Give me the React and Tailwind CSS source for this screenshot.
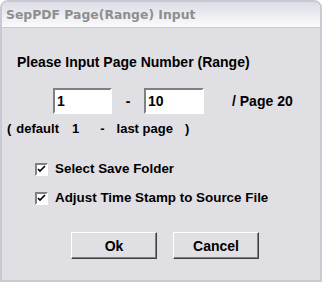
import React, { useState } from "react";

const sunken = "border-t-[#808080] border-l-[#808080] border-b-white border-r-white";

const Check = ({ label, checked, onToggle }) => (
  <label className="flex items-center gap-[7px] cursor-pointer h-[16px]" onClick={onToggle}>
    <span className={`w-[13px] h-[13px] bg-white border-2 ${sunken} flex items-center justify-center`}>
      {checked && (
        <svg width="9" height="9" viewBox="0 0 9 9">
          <path d="M1 4 L3 6 L8 1" stroke="#000" strokeWidth="1.6" fill="none" />
        </svg>
      )}
    </span>
    <span className="text-[13.4px]">{label}</span>
  </label>
);

const Btn = ({ children }) => (
  <button
    type="button"
    className="w-[86px] h-[27px] bg-[#e0dfe3] border border-t-white border-l-white border-b-[#404040] border-r-[#404040] shadow-[inset_-1px_-1px_0_#808080] font-bold"
  >
    {children}
  </button>
);

export default function App() {
  const [from, setFrom] = useState("1");
  const [to, setTo] = useState("10");
  const [saveFolder, setSaveFolder] = useState(true);
  const [stamp, setStamp] = useState(true);

  return (
    <div className="w-[322px] h-[282px] bg-white font-['Liberation_Sans',Arial,sans-serif] text-[14px] leading-[16px] text-black">
      <div className="w-full h-full flex flex-col border-2 border-[#c9c9d4] rounded-t-[8px] overflow-hidden">
        <div className="h-[26px] shrink-0 bg-gradient-to-b from-[#dcdce6] to-[#fbfbfd] border-b border-[#c7c7cf] flex items-center pl-[4px]">
          <span className="font-['DejaVu_Sans',sans-serif] font-bold text-[12.4px] text-[#8e8e8e]">SepPDF Page(Range) Input</span>
        </div>
        <div className="flex-1 bg-[#e0dfe3] flex flex-col font-bold">
          <div className="pl-[15px] pt-[26px]">Please Input Page Number (Range)</div>
          <div className="flex items-center pl-[51px] mt-[18px]">
            <input
              value={from}
              onChange={(e) => setFrom(e.target.value)}
              className={`w-[59px] h-[26px] bg-white border-2 ${sunken} px-[2px] outline-none font-bold`}
            />
            <span className="w-[32px] text-center">-</span>
            <input
              value={to}
              onChange={(e) => setTo(e.target.value)}
              className={`w-[60px] h-[26px] bg-white border-2 ${sunken} px-[2px] outline-none font-bold`}
            />
            <span className="ml-[28px]">/ Page 20</span>
          </div>
          <div className="pl-[5px] mt-[7px] flex text-[13px]">
            <span>(</span>
            <span className="ml-[5px]">default</span>
            <span className="ml-[13px]">1</span>
            <span className="ml-[21px]">-</span>
            <span className="ml-[12px]">last page</span>
            <span className="ml-[12px]">)</span>
          </div>
          <div className="pl-[33px] mt-[24px] flex flex-col gap-[13px]">
            <Check label="Select Save Folder" checked={saveFolder} onToggle={() => setSaveFolder((v) => !v)} />
            <Check label="Adjust Time Stamp to Source File" checked={stamp} onToggle={() => setStamp((v) => !v)} />
          </div>
          <div className="flex gap-[16px] pl-[69px] mt-[26px]">
            <Btn>Ok</Btn>
            <Btn>Cancel</Btn>
          </div>
        </div>
      </div>
    </div>
  );
}
